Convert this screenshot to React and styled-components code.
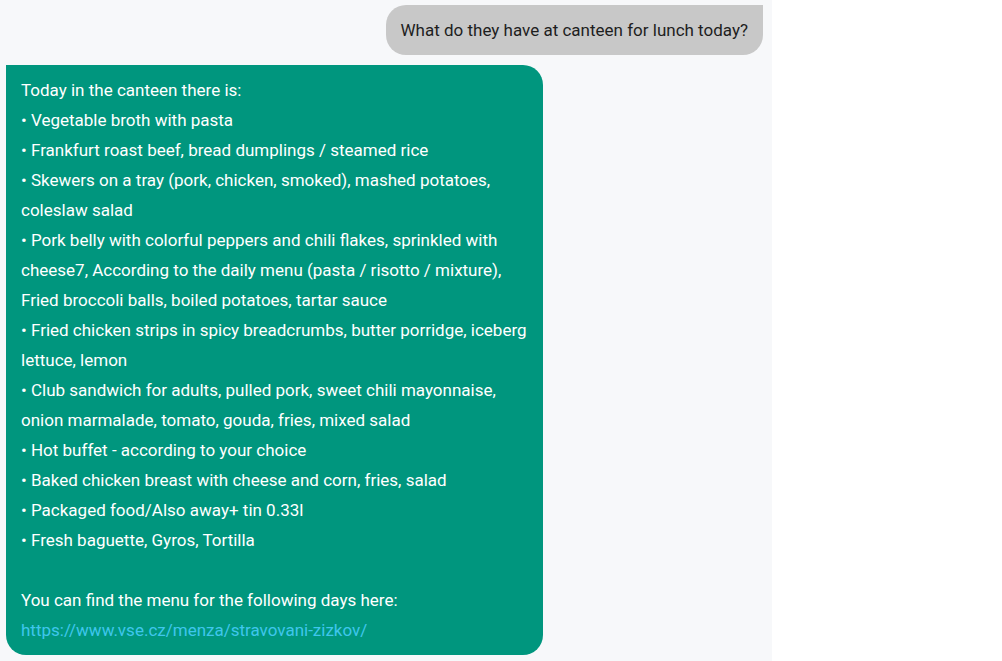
import styled, { createGlobalStyle } from "styled-components";

const GlobalStyle = createGlobalStyle`
  html, body {
    margin: 0;
    padding: 0;
    background: #ffffff;
    font-family: Roboto, "Liberation Sans", sans-serif;
  }
`

const Page = styled.div`
  display: flex;
  width: 100vw;
  height: 100vh;
  background: #ffffff;
`

const Chat = styled.div`
  width: 772px;
  height: 100%;
  background: #f7f8fa;
  box-sizing: border-box;
  padding: 5px 9px 0 6px;
  display: flex;
  flex-direction: column;
  gap: 10px;
  overflow: hidden;
`

const Bubble = styled.div`
  max-width: 537px;
  box-sizing: border-box;
  padding: 10px 15px;
  font-size: 17px;
  line-height: 30px;
  white-space: pre-line;
  align-self: ${p => (p.$mine ? "flex-end" : "flex-start")};
  background: ${p => (p.$mine ? "#c8c8c8" : "#00967e")};
  color: ${p => (p.$mine ? "#1e1e1e" : "#ffffff")};
  border-radius: ${p => (p.$mine ? "20px 0 20px 20px" : "0 20px 20px 20px")};
`

const Link = styled.a`
  color: #3fc6ec;
  text-decoration: none;
`

const answer = `Today in the canteen there is:
• Vegetable broth with pasta
• Frankfurt roast beef, bread dumplings / steamed rice
• Skewers on a tray (pork, chicken, smoked), mashed potatoes, coleslaw salad
• Pork belly with colorful peppers and chili flakes, sprinkled with cheese7, According to the daily menu (pasta / risotto / mixture), Fried broccoli balls, boiled potatoes, tartar sauce
• Fried chicken strips in spicy breadcrumbs, butter porridge, iceberg lettuce, lemon
• Club sandwich for adults, pulled pork, sweet chili mayonnaise, onion marmalade, tomato, gouda, fries, mixed salad
• Hot buffet - according to your choice
• Baked chicken breast with cheese and corn, fries, salad
• Packaged food/Also away+ tin 0.33l
• Fresh baguette, Gyros, Tortilla

You can find the menu for the following days here:
`

const App = () => {
  return (
    <Page>
      <GlobalStyle />
      <Chat>
        <Bubble $mine>What do they have at canteen for lunch today?</Bubble>
        <Bubble>
          {answer}
          <Link href="#">https://www.vse.cz/menza/stravovani-zizkov/</Link>
        </Bubble>
      </Chat>
    </Page>
  )
}

export default App
